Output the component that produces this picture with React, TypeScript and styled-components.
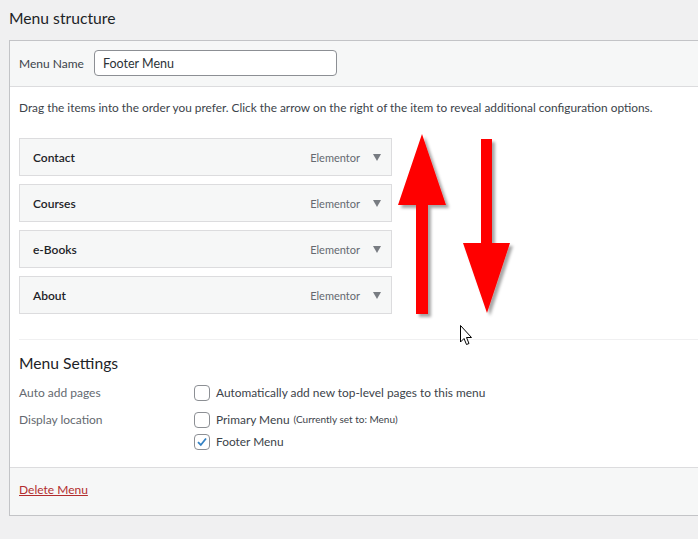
import React from 'react';
import styled, { createGlobalStyle } from 'styled-components';

const GlobalStyle = createGlobalStyle`
    html, body {
        margin: 0;
        padding: 0;
        background: #f0f0f1;
        overflow: hidden;
    }
    body {
        font-family: Lato, 'Noto Sans', sans-serif;
        color: #3c434a;
        font-size: 12px;
    }
`;

type MenuItem = { title: string; kind: string };

const items: MenuItem[] = [
    { title: 'Contact', kind: 'Elementor' },
    { title: 'Courses', kind: 'Elementor' },
    { title: 'e-Books', kind: 'Elementor' },
    { title: 'About', kind: 'Elementor' },
];

const App: React.FC = () => {
    return (
        <Page>
            <GlobalStyle />
            <Title>Menu structure</Title>
            <Panel>
                <Header>
                    <NameLabel>Menu Name</NameLabel>
                    <NameInput defaultValue="Footer Menu" />
                </Header>
                <Body>
                    <Description>
                        Drag the items into the order you prefer. Click the arrow on the right of the item to reveal
                        additional configuration options.
                    </Description>
                    <ItemList>
                        {items.map((item) => (
                            <ItemBar key={item.title}>
                                <ItemTitle>{item.title}</ItemTitle>
                                <ItemControls>
                                    <ItemType>{item.kind}</ItemType>
                                    <Caret />
                                </ItemControls>
                            </ItemBar>
                        ))}
                    </ItemList>
                    <Divider />
                    <SettingsTitle>Menu Settings</SettingsTitle>
                    <SettingsGrid>
                        <SettingLabel>Auto add pages</SettingLabel>
                        <Options>
                            <Option>
                                <Checkbox checked={false} />
                                Automatically add new top-level pages to this menu
                            </Option>
                        </Options>
                        <SettingLabel>Display location</SettingLabel>
                        <Options>
                            <Option>
                                <Checkbox checked={false} />
                                Primary Menu <Note>(Currently set to: Menu)</Note>
                            </Option>
                            <Option>
                                <Checkbox checked={true} />
                                Footer Menu
                            </Option>
                        </Options>
                    </SettingsGrid>
                </Body>
                <Footer>
                    <DeleteLink href="#">Delete Menu</DeleteLink>
                </Footer>
            </Panel>
            <Overlay width="698" height="539" viewBox="0 0 698 539">
                <defs>
                    <filter id="shadow" x="-20%" y="-20%" width="140%" height="140%">
                        <feGaussianBlur in="SourceAlpha" stdDeviation="1.5" />
                        <feOffset dx="3" dy="3" result="b" />
                        <feFlood floodColor="#000" floodOpacity="0.35" />
                        <feComposite in2="b" operator="in" />
                        <feMerge>
                            <feMergeNode />
                            <feMergeNode in="SourceGraphic" />
                        </feMerge>
                    </filter>
                </defs>
                <g filter="url(#shadow)" fill="#ff0000">
                    <polygon points="422,134 446,205 428,205 428,314 416,314 416,205 398,205" />
                    <polygon points="481,139 492,139 492,243 510,243 487,313 463,243 481,243" />
                </g>
                <path
                    d="M460.5 325.5 L460.5 342 L464 338.5 L466.5 344.5 L469 343.5 L466.5 337.5 L471.5 337.5 Z"
                    fill="#fff"
                    stroke="#000"
                    strokeWidth="1"
                    strokeLinejoin="round"
                />
            </Overlay>
        </Page>
    );
};

const Checkbox: React.FC<{ checked: boolean }> = ({ checked }) => (
    <Box>
        {checked && (
            <svg width="14" height="14" viewBox="0 0 14 14">
                <path d="M3 7.2 L5.8 10 L11 3.5" fill="none" stroke="#3582c4" strokeWidth="1.8" />
            </svg>
        )}
    </Box>
);

const Page = styled.div`
    position: relative;
    width: 698px;
    height: 539px;
    padding: 8px 0 0 9px;
    box-sizing: border-box;
`;

const Title = styled.h2`
    margin: 0 0 12px 0;
    font-size: 15.7px;
    line-height: 20px;
    font-weight: 400;
    color: #1d2327;
`;

const Panel = styled.div`
    border: 1px solid #c3c4c7;
    border-right: none;
    background: #fff;
    width: 700px;
    box-sizing: border-box;
`;

const Header = styled.div`
    display: flex;
    align-items: center;
    gap: 10px;
    background: #f6f7f7;
    border-bottom: 1px solid #dcdcde;
    padding: 9px 9px 10px 9px;
`;

const NameLabel = styled.span`
    font-size: 12px;
    color: #3c434a;
`;

const NameInput = styled.input`
    width: 243px;
    height: 26px;
    box-sizing: border-box;
    border: 1px solid #8c8f94;
    border-radius: 4px;
    padding: 0 8px;
    font-family: inherit;
    font-size: 12.5px;
    color: #2c3338;
    background: #fff;
    outline: none;
`;

const Body = styled.div`
    padding: 12px 0 0 9px;
`;

const Description = styled.p`
    margin: 0 0 21px 0;
    font-size: 11.85px;
    line-height: 18px;
    color: #3c434a;
    white-space: nowrap;
`;

const ItemList = styled.div`
    display: flex;
    flex-direction: column;
    gap: 8px;
    width: 373px;
`;

const ItemBar = styled.div`
    display: flex;
    align-items: center;
    justify-content: space-between;
    height: 38px;
    box-sizing: border-box;
    border: 1px solid #dcdcde;
    background: #f6f7f7;
    padding: 0 10px 0 13px;
`;

const ItemTitle = styled.span`
    font-size: 12px;
    font-weight: 600;
    color: #1d2327;
`;

const ItemControls = styled.div`
    display: flex;
    align-items: center;
    gap: 13px;
`;

const ItemType = styled.span`
    font-size: 11px;
    color: #646970;
`;

const Caret = styled.span`
    width: 0;
    height: 0;
    border-left: 4.5px solid transparent;
    border-right: 4.5px solid transparent;
    border-top: 7px solid #787c82;
    margin-top: 1px;
`;

const Divider = styled.hr`
    border: none;
    border-top: 1px solid #f0f0f1;
    margin: 25px 0 0 0;
`;

const SettingsTitle = styled.h3`
    margin: 13px 0 10px 0;
    font-size: 15.7px;
    line-height: 20px;
    font-weight: 400;
    color: #1d2327;
`;

const SettingsGrid = styled.div`
    display: grid;
    grid-template-columns: 175px 1fr;
    row-gap: 8px;
    padding-bottom: 16px;
`;

const SettingLabel = styled.span`
    font-size: 12px;
    line-height: 19px;
    color: #646970;
`;

const Options = styled.div`
    display: flex;
    flex-direction: column;
    gap: 3px;
`;

const Option = styled.label`
    display: flex;
    align-items: center;
    gap: 6px;
    font-size: 11.9px;
    line-height: 19px;
    color: #3c434a;
    white-space: nowrap;
`;

const Note = styled.span`
    font-size: 10px;
    margin-left: -2px;
`;

const Box = styled.span`
    display: inline-flex;
    align-items: center;
    justify-content: center;
    width: 16px;
    height: 16px;
    box-sizing: border-box;
    border: 1px solid #8c8f94;
    border-radius: 4px;
    background: #fff;
`;

const Footer = styled.div`
    background: #f6f7f7;
    border-top: 1px solid #dcdcde;
    padding: 12px 9px 15px 9px;
    line-height: 20px;
`;

const DeleteLink = styled.a`
    color: #b32d2e;
    font-size: 12px;
    text-decoration: underline;
`;

const Overlay = styled.svg`
    position: absolute;
    left: 0;
    top: 0;
    pointer-events: none;
`;

export default App;
